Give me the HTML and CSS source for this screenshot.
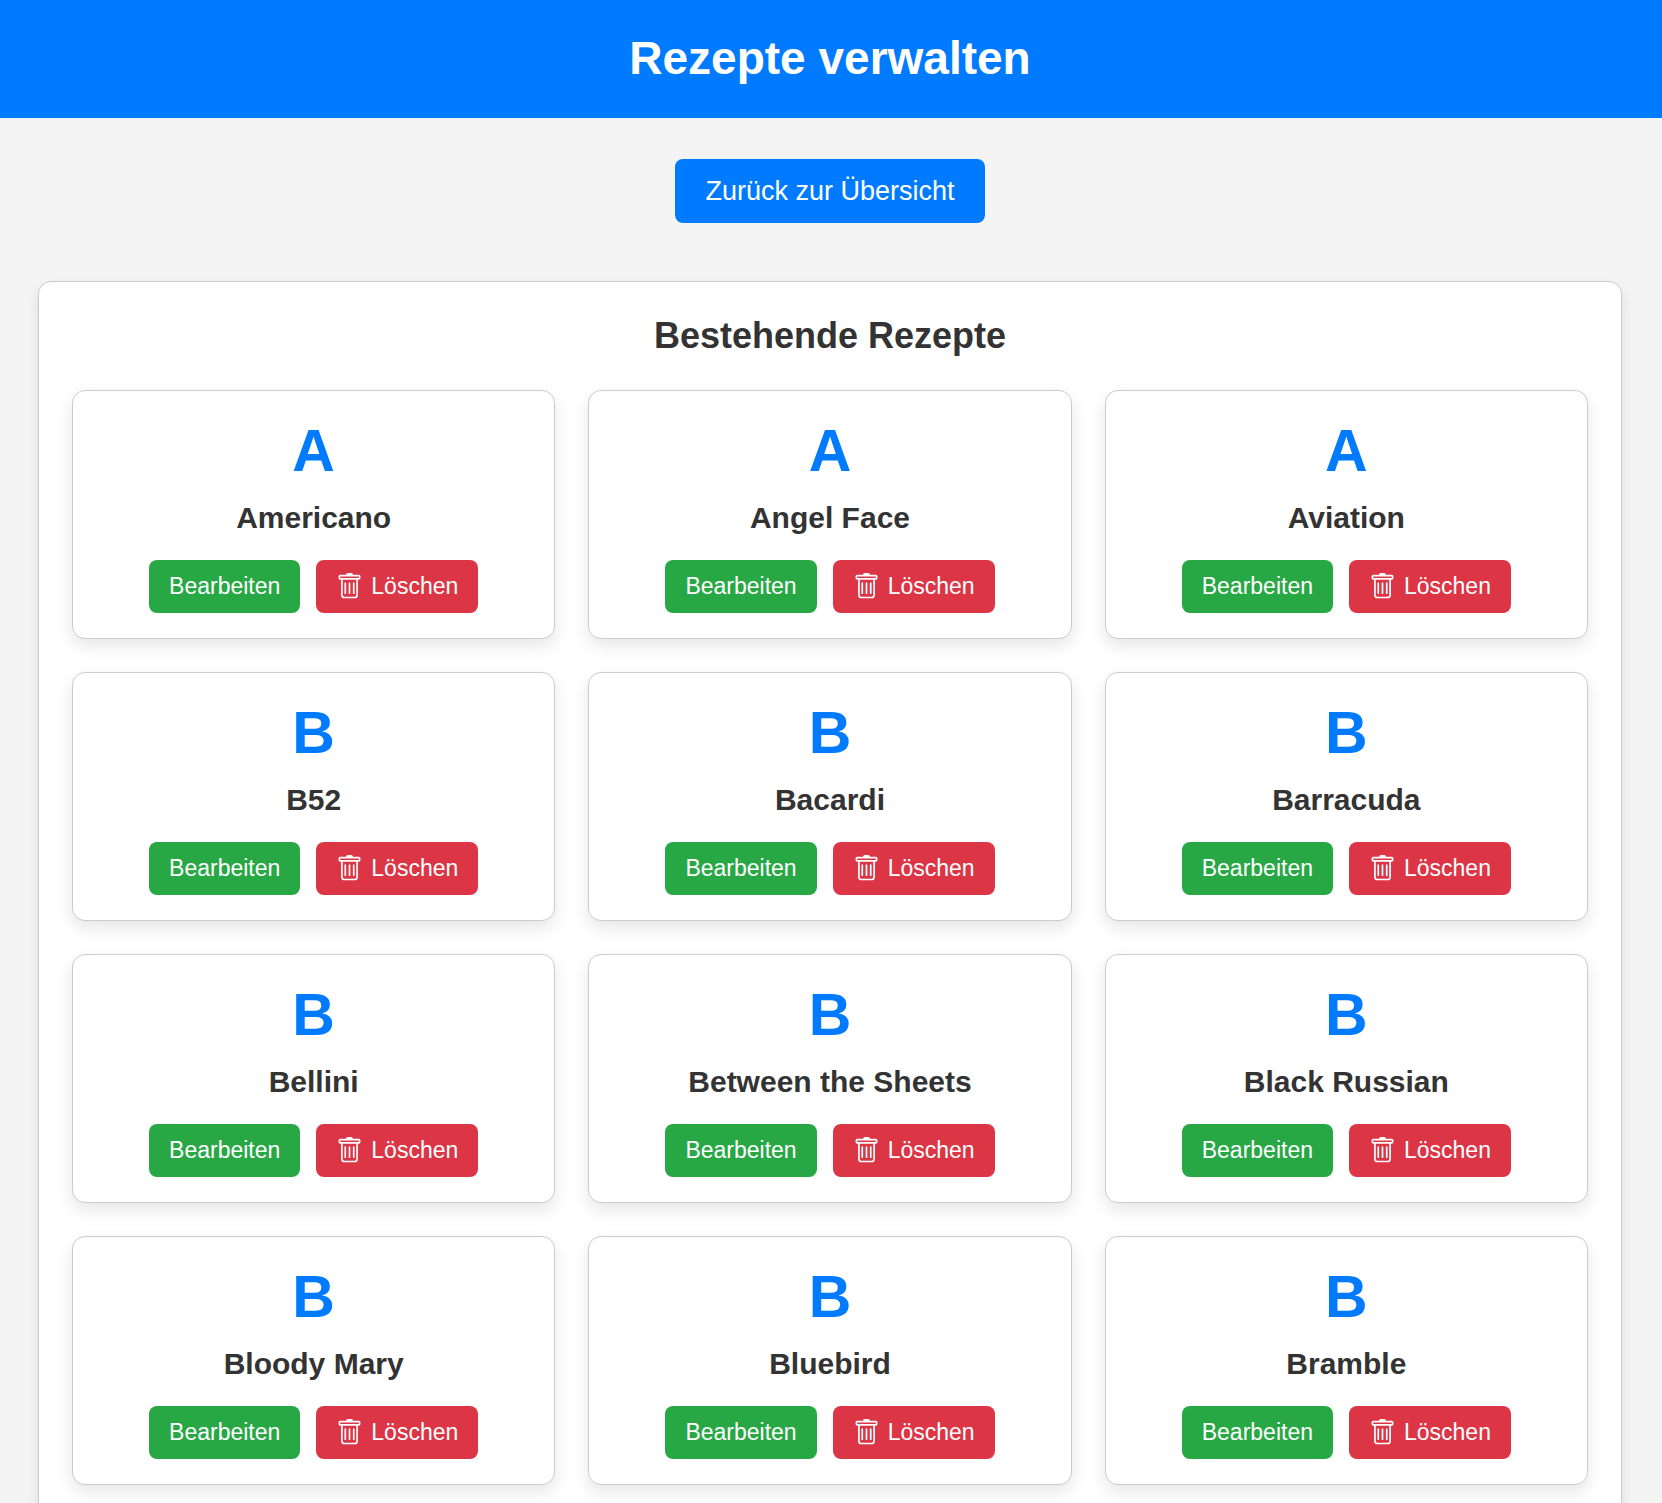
FILE: index.html
```html
<!DOCTYPE html>
<html lang="de">
<head>
<meta charset="utf-8">
<meta name="viewport" content="width=device-width, initial-scale=1">
<title>Rezepte verwalten</title>
<link rel="stylesheet" href="styles.css">
</head>
<body>
<svg class="sprite" aria-hidden="true">
  <symbol id="trash" viewBox="0 0 16 16">
    <path d="M5.5 5.5A.5.5 0 0 1 6 6v6a.5.5 0 0 1-1 0V6a.5.5 0 0 1 .5-.5m2.5 0a.5.5 0 0 1 .5.5v6a.5.5 0 0 1-1 0V6a.5.5 0 0 1 .5-.5m3 .5a.5.5 0 0 0-1 0v6a.5.5 0 0 0 1 0z"/>
    <path d="M14.5 3a1 1 0 0 1-1 1H13v9a2 2 0 0 1-2 2H5a2 2 0 0 1-2-2V4h-.5a1 1 0 0 1-1-1V2a1 1 0 0 1 1-1H6a1 1 0 0 1 1-1h2a1 1 0 0 1 1 1h3.5a1 1 0 0 1 1 1zM4.118 4 4 4.059V13a1 1 0 0 0 1 1h6a1 1 0 0 0 1-1V4.059L11.882 4zM2.5 3h11V2h-11z"/>
  </symbol>
</svg>
<header class="page-header">
  <h1>Rezepte verwalten</h1>
</header>
<nav class="back-nav">
  <a class="back-link" href="#">Zurück zur Übersicht</a>
</nav>
<main class="panel">
  <h2>Bestehende Rezepte</h2>
  <div class="recipe-grid">
    <article class="card">
      <div class="initial">A</div>
      <h3>Americano</h3>
      <div class="actions">
        <button type="button" class="btn btn-edit">Bearbeiten</button>
        <button type="button" class="btn btn-delete"><svg class="icon" aria-hidden="true"><use href="#trash"/></svg>Löschen</button>
      </div>
    </article>
    <article class="card">
      <div class="initial">A</div>
      <h3>Angel Face</h3>
      <div class="actions">
        <button type="button" class="btn btn-edit">Bearbeiten</button>
        <button type="button" class="btn btn-delete"><svg class="icon" aria-hidden="true"><use href="#trash"/></svg>Löschen</button>
      </div>
    </article>
    <article class="card">
      <div class="initial">A</div>
      <h3>Aviation</h3>
      <div class="actions">
        <button type="button" class="btn btn-edit">Bearbeiten</button>
        <button type="button" class="btn btn-delete"><svg class="icon" aria-hidden="true"><use href="#trash"/></svg>Löschen</button>
      </div>
    </article>
    <article class="card">
      <div class="initial">B</div>
      <h3>B52</h3>
      <div class="actions">
        <button type="button" class="btn btn-edit">Bearbeiten</button>
        <button type="button" class="btn btn-delete"><svg class="icon" aria-hidden="true"><use href="#trash"/></svg>Löschen</button>
      </div>
    </article>
    <article class="card">
      <div class="initial">B</div>
      <h3>Bacardi</h3>
      <div class="actions">
        <button type="button" class="btn btn-edit">Bearbeiten</button>
        <button type="button" class="btn btn-delete"><svg class="icon" aria-hidden="true"><use href="#trash"/></svg>Löschen</button>
      </div>
    </article>
    <article class="card">
      <div class="initial">B</div>
      <h3>Barracuda</h3>
      <div class="actions">
        <button type="button" class="btn btn-edit">Bearbeiten</button>
        <button type="button" class="btn btn-delete"><svg class="icon" aria-hidden="true"><use href="#trash"/></svg>Löschen</button>
      </div>
    </article>
    <article class="card">
      <div class="initial">B</div>
      <h3>Bellini</h3>
      <div class="actions">
        <button type="button" class="btn btn-edit">Bearbeiten</button>
        <button type="button" class="btn btn-delete"><svg class="icon" aria-hidden="true"><use href="#trash"/></svg>Löschen</button>
      </div>
    </article>
    <article class="card">
      <div class="initial">B</div>
      <h3>Between the Sheets</h3>
      <div class="actions">
        <button type="button" class="btn btn-edit">Bearbeiten</button>
        <button type="button" class="btn btn-delete"><svg class="icon" aria-hidden="true"><use href="#trash"/></svg>Löschen</button>
      </div>
    </article>
    <article class="card">
      <div class="initial">B</div>
      <h3>Black Russian</h3>
      <div class="actions">
        <button type="button" class="btn btn-edit">Bearbeiten</button>
        <button type="button" class="btn btn-delete"><svg class="icon" aria-hidden="true"><use href="#trash"/></svg>Löschen</button>
      </div>
    </article>
    <article class="card">
      <div class="initial">B</div>
      <h3>Bloody Mary</h3>
      <div class="actions">
        <button type="button" class="btn btn-edit">Bearbeiten</button>
        <button type="button" class="btn btn-delete"><svg class="icon" aria-hidden="true"><use href="#trash"/></svg>Löschen</button>
      </div>
    </article>
    <article class="card">
      <div class="initial">B</div>
      <h3>Bluebird</h3>
      <div class="actions">
        <button type="button" class="btn btn-edit">Bearbeiten</button>
        <button type="button" class="btn btn-delete"><svg class="icon" aria-hidden="true"><use href="#trash"/></svg>Löschen</button>
      </div>
    </article>
    <article class="card">
      <div class="initial">B</div>
      <h3>Bramble</h3>
      <div class="actions">
        <button type="button" class="btn btn-edit">Bearbeiten</button>
        <button type="button" class="btn btn-delete"><svg class="icon" aria-hidden="true"><use href="#trash"/></svg>Löschen</button>
      </div>
    </article>
  </div>
</main>
</body>
</html>
```
FILE: styles.css
```css
* {
  box-sizing: border-box;
}

body {
  margin: 0;
  background: #f4f4f4;
  color: #333;
  font-family: "Liberation Sans", Arial, sans-serif;
  text-align: center;
}

h1,
h2,
h3 {
  margin: 0;
  font-weight: bold;
}

.sprite {
  display: none;
}

.page-header {
  padding: 32px 40px 34px 38px;
  background: #007bff;
  color: #fff;
}

h1 {
  font-size: 46px;
  line-height: 52px;
}

.back-nav {
  display: flex;
  justify-content: center;
  padding: 41px 40px 58px 38px;
}

.back-link {
  padding: 17px 30px;
  border-radius: 8px;
  background: #007bff;
  color: #fff;
  font-size: 27px;
  line-height: 30px;
  text-decoration: none;
}

.panel {
  margin: 0 40px 0 38px;
  padding: 33px;
  border: 1px solid #ccc;
  border-radius: 13px;
  background: #fff;
  box-shadow: 0 7px 13px rgba(0, 0, 0, 0.1);
}

h2 {
  margin-bottom: 33px;
  font-size: 36px;
  line-height: 42px;
}

.recipe-grid {
  display: grid;
  grid-template-columns: repeat(auto-fit, minmax(400px, 1fr));
  gap: 33px;
}

.card {
  padding: 25px;
  border: 1px solid #ccc;
  border-radius: 13px;
  background: #fff;
  box-shadow: 0 7px 17px rgba(0, 0, 0, 0.1);
}

.initial {
  color: #007bff;
  font-size: 59px;
  font-weight: bold;
  line-height: 70px;
}

h3 {
  margin: 15px 0 25px;
  font-size: 30px;
  line-height: 34px;
}

.actions {
  display: flex;
  justify-content: center;
  gap: 16px;
}

.btn {
  display: flex;
  align-items: center;
  gap: 8px;
  padding: 13px 20px;
  border: 0;
  border-radius: 8px;
  color: #fff;
  font-family: inherit;
  font-size: 23px;
  line-height: 27px;
  cursor: pointer;
}

.btn-edit {
  background: #28a745;
}

.btn-delete {
  background: #dc3545;
}

.icon {
  width: 27px;
  height: 27px;
  fill: currentColor;
}
```
